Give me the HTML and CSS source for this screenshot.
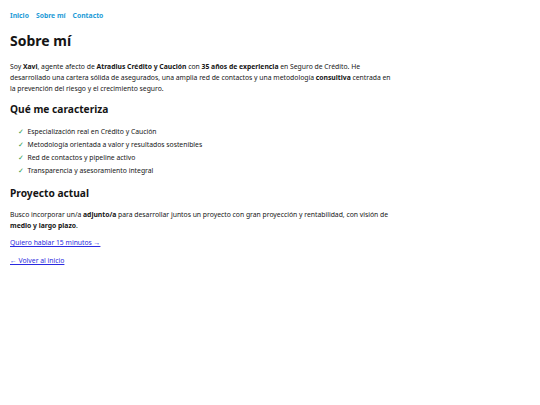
FILE: index.html
```html
<!DOCTYPE html>
<html lang="es">
<head>
<meta charset="utf-8">
<title>Sobre mí</title>
<link rel="stylesheet" href="styles.css">
</head>
<body>
<div class="page">
  <nav class="nav">
    <a href="#">Inicio</a>
    <a href="#">Sobre mí</a>
    <a href="#">Contacto</a>
  </nav>
  <h1 class="title">Sobre mí</h1>
  <p class="text">Soy <strong>Xavi</strong>, agente afecto de <strong>Atradius Crédito y Caución</strong> con <strong>35 años de experiencia</strong> en Seguro de Crédito. He desarrollado una cartera sólida de asegurados, una amplia red de contactos y una metodología <strong>consultiva</strong> centrada en la prevención del riesgo y el crecimiento seguro.</p>
  <h2 class="subtitle">Qué me caracteriza</h2>
  <ul class="list">
    <li><span class="check">✓</span>Especialización real en Crédito y Caución</li>
    <li><span class="check">✓</span>Metodología orientada a valor y resultados sostenibles</li>
    <li><span class="check">✓</span>Red de contactos y pipeline activo</li>
    <li><span class="check">✓</span>Transparencia y asesoramiento integral</li>
  </ul>
  <h2 class="subtitle">Proyecto actual</h2>
  <p class="text">Busco incorporar un/a <strong>adjunto/a</strong> para desarrollar juntos un proyecto con gran proyección y rentabilidad, con visión de <strong>medio y largo plazo</strong>.</p>
  <p class="text"><a class="link" href="#">Quiero hablar 15 minutos →</a></p>
  <p class="text"><a class="link" href="#">← Volver al inicio</a></p>
</div>
</body>
</html>
```
FILE: styles.css
```css
html, body {
  margin: 0;
  padding: 0;
  background: #fff;
}
body {
  font-family: "Noto Sans", "Open Sans", sans-serif;
  color: #151515;
}
.page {
  padding: 10px 10px;
  max-width: 382px;
}
.nav {
  display: flex;
  gap: 7px;
  font-size: 6.8px;
  font-weight: 700;
  line-height: 11px;
}
.nav a {
  color: #1e9bd7;
  text-decoration: none;
}
.title {
  font-size: 14px;
  line-height: 18px;
  margin: 11px 0 11px;
  font-weight: 700;
}
.text {
  font-size: 6.8px;
  line-height: 11px;
  margin: 0 0 6.5px;
}
.subtitle {
  font-size: 10.2px;
  line-height: 14px;
  margin: 8px 0 8.5px;
  font-weight: 700;
}
.list {
  list-style: none;
  margin: 0 0 9.5px;
  padding: 0 0 0 8px;
  font-size: 6.8px;
  line-height: 13px;
}
.check {
  color: #2e9b4a;
  margin-right: 3.5px;
}
.link {
  color: #2a2ae0;
  text-decoration: underline;
}
```
